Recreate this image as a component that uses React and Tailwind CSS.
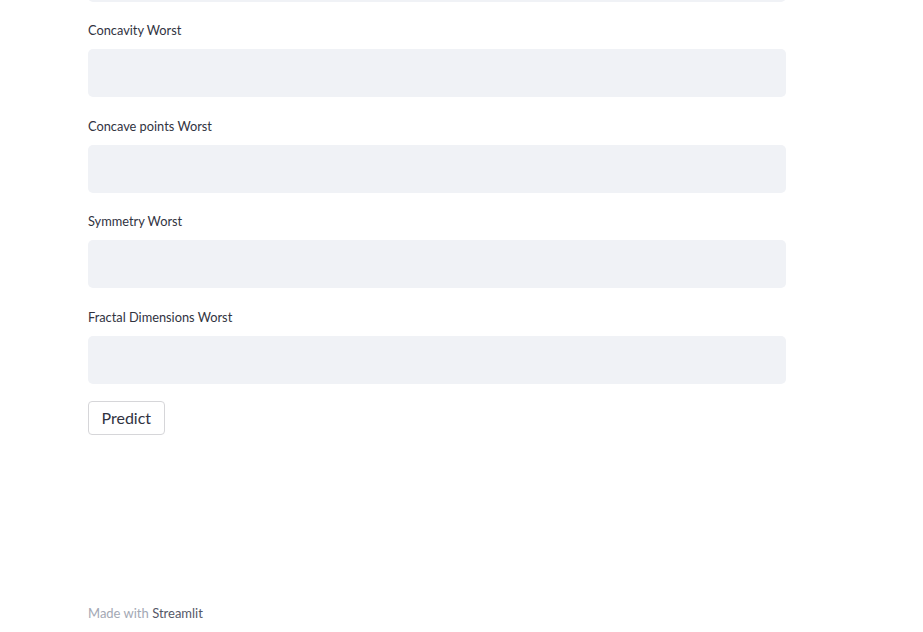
import React from 'react';

const fields = [
  { label: 'Concavity Worst', gap: 'mt-[18px]' },
  { label: 'Concave points Worst', gap: 'mt-[19px]' },
  { label: 'Symmetry Worst', gap: 'mt-[18px]' },
  { label: 'Fractal Dimensions Worst', gap: 'mt-[19px]' },
];

const Field = ({ label, gap }) => (
  <div className={gap}>
    <div className="h-5 leading-5 text-[12.8px] text-[#31333f] mb-[9px]">{label}</div>
    <div className="h-12 w-full rounded-[5px] bg-[#f0f2f6]" />
  </div>
);

export default function App() {
  return (
    <div className="h-[632px] w-[923px] bg-white overflow-hidden font-['Source_Sans_Pro','Lato',sans-serif] flex flex-col">
      <div className="w-[698px] ml-[88px] flex flex-col">
        <div className="h-12 w-full rounded-[5px] bg-[#f0f2f6] -mt-[46px]" />
        {fields.map((f) => (
          <Field key={f.label} label={f.label} gap={f.gap} />
        ))}
        <div className="mt-[17px]">
          <button className="h-[34px] px-[12.5px] rounded-[4px] border border-[#d6d6d9] bg-white text-[16px] text-[#31333f]">
            Predict
          </button>
        </div>
      </div>
      <div className="mt-auto mb-[9px] ml-[88px] text-[13px] leading-5 text-[#a3a8b4]">
        Made with <span className="text-[#555867]">Streamlit</span>
      </div>
    </div>
  );
}
